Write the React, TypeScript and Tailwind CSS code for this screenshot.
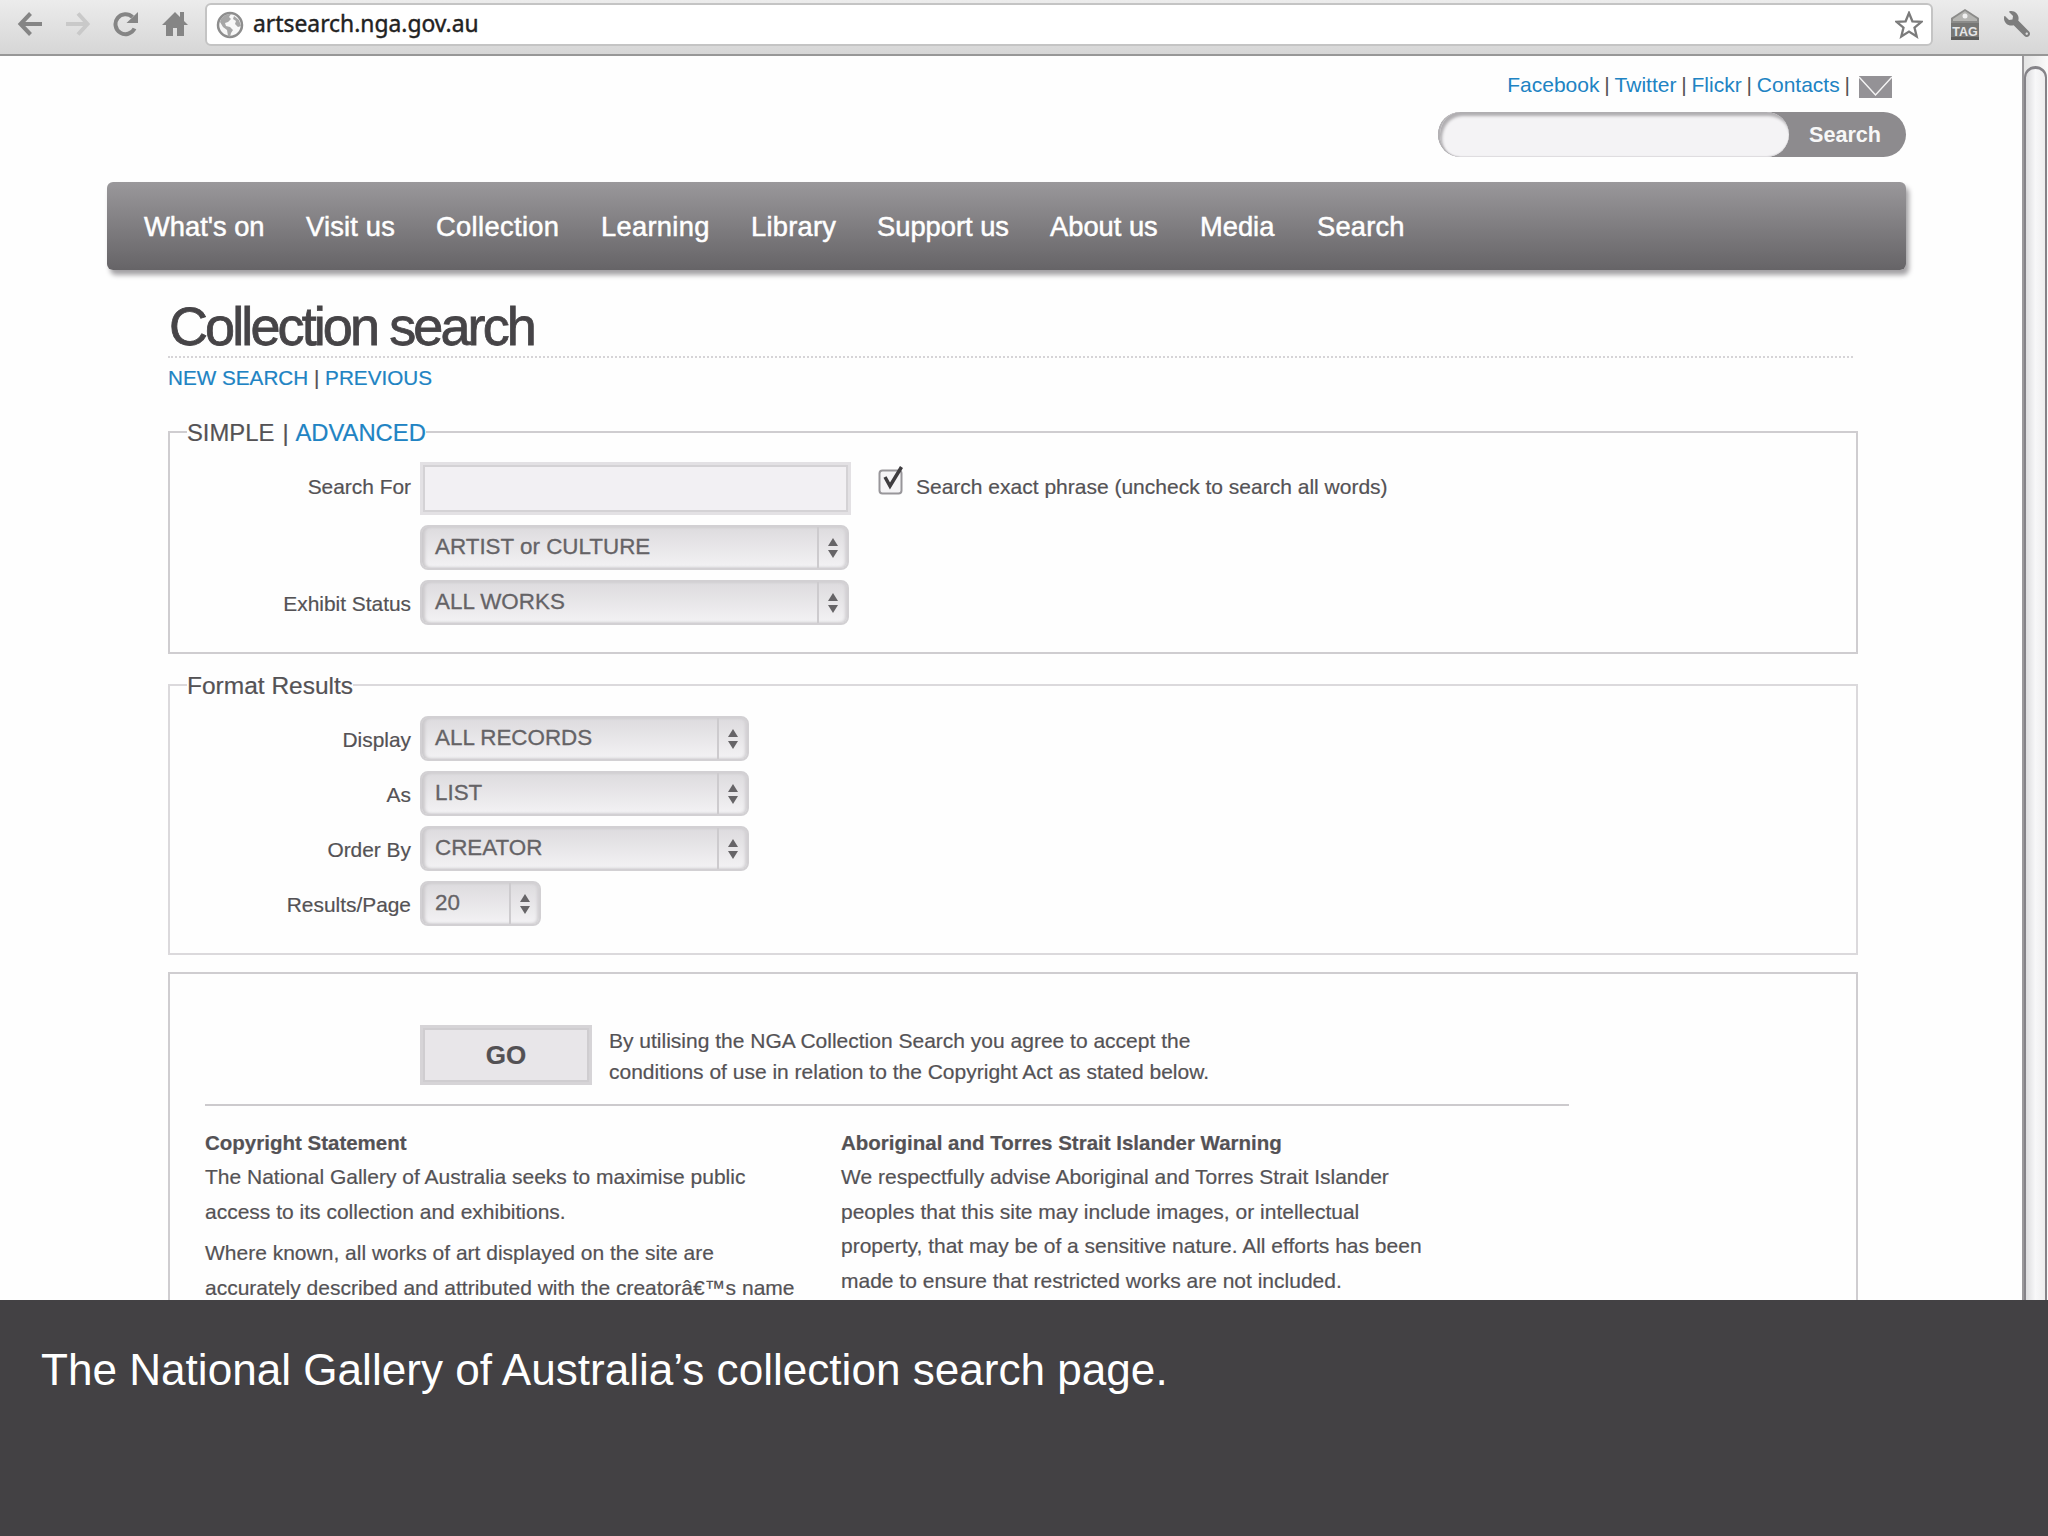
import type { ReactNode } from "react";
import { FaWrench } from "react-icons/fa";

const navItems = [
  { label: "What's on", style: "w-[162px]" },
  { label: "Visit us", style: "w-[130px] tracking-[0.2px]" },
  { label: "Collection", style: "w-[165px] tracking-[0.35px]" },
  { label: "Learning", style: "w-[150px] tracking-[0.3px]" },
  { label: "Library", style: "w-[126px] tracking-[0.25px]" },
  { label: "Support us", style: "w-[173px]" },
  { label: "About us", style: "w-[150px]" },
  { label: "Media", style: "w-[117px]" },
  { label: "Search", style: "w-[90px] tracking-[0.2px]" },
];

function Toolbar() {
  return (
    <div className="flex h-[56px] shrink-0 items-start border-b-2 border-[#979797] bg-linear-to-b from-[#ececec] to-[#d6d6d6]">
      <div className="flex pt-[11px] pl-[17px] text-[#858585]">
        <svg className="mr-[22px] h-[26px] w-[26px]" viewBox="0 0 26 26" fill="none" stroke="currentColor" strokeWidth="4">
          <path d="M13.5 2.5 3.5 13l10 10.500M4 13h21" />
        </svg>
        <svg className="mr-[22px] h-[26px] w-[26px] text-[#c9c9c9]" viewBox="0 0 26 26" fill="none" stroke="currentColor" strokeWidth="4">
          <path d="M13 2.500 22.500 13 13 23.500M22 13H1" />
        </svg>
        <svg className="mr-[23px] h-[26px] w-[26px]" viewBox="0 0 26 26" fill="none" stroke="currentColor" strokeWidth="4">
          <path d="M21.500 17.500A10 10 0 1 1 19.500 6" />
          <path d="M25 1v11H13.500z" fill="currentColor" stroke="none" />
        </svg>
        <svg className="h-[26px] w-[26px]" viewBox="0 0 26 26" fill="currentColor">
          <path d="M13 1 0 14h4v11h7v-8h4v8h7V14h4l-4-4V1h-4v5z" />
        </svg>
      </div>
      <div className="mt-[3px] ml-[17px] flex h-[43px] w-[1728px] items-center rounded-[6px] border-2 border-[#c4c4c4] bg-white pr-[8px] pl-[9px]">
        <svg className="h-[28px] w-[28px]" viewBox="0 0 28 28">
          <circle cx="14" cy="14" r="12" fill="#f7f7f7" stroke="#8d8d8d" strokeWidth="2.500" />
          <path d="M5 8c3-4 6-5 10-5l-2 3 2 2-3 3-3 1 1 3 4 1 3 3-2 3-1 4-2-1-1-6-4-3-3-5z" fill="#a6a6a6" />
          <path d="m18 5 5 4 2 6-3 1-3-3 1-3-3-2z" fill="#a6a6a6" />
        </svg>
        <span className="ml-[9px] flex-1 pb-[2px] font-['Noto_Sans',sans-serif] text-[22.850px] leading-[30px] text-[#222] [-webkit-text-stroke:0.4px_#222]">
          artsearch.nga.gov.au
        </span>
        <svg className="h-[28px] w-[28px]" viewBox="0 0 28 28" fill="#fff" stroke="#7b7b7b" strokeWidth="2.300">
          <path d="m14 2 3.400 8.300 9 .6-6.900 5.700 2.200 8.900L14 20.600l-7.700 4.900 2.200-8.900-6.900-5.700 9-.6z" />
        </svg>
      </div>
      <svg className="mt-[8px] ml-[17px] h-[33px] w-[30px]" viewBox="0 0 30 33">
        <path d="M1 32V10L15 1l14 9v22z" fill="#8b8b89" />
        <path d="M3 11 15 3l12 8v2H3z" fill="#b5b5b2" />
        <circle cx="15" cy="8" r="2.500" fill="#f0f0f0" />
        <path d="M1 15h28v17H1z" fill="#777775" />
        <path d="M1 29h28v3H1z" fill="#5d5d5b" />
        <text x="15" y="28" textAnchor="middle" fontFamily="Liberation Sans, sans-serif" fontWeight="700" fontSize="12.500" fill="#e6e6e6">
          TAG
        </text>
      </svg>
      <FaWrench className="mt-[11px] ml-[24px] h-[26px] w-[26px] -scale-x-100 text-[#7d7d7d]" />
    </div>
  );
}

function Link({ children }: { children: ReactNode }) {
  return <a className="text-[#2083c3]">{children}</a>;
}

function SelectBox({ value, width }: { value: string; width: string }) {
  return (
    <div
      className={`flex h-[45px] ${width} rounded-[8px] border-2 border-[#d2d0d3] bg-linear-to-b from-[#dddbde] to-[#f3f2f4] shadow-[inset_3px_0_3px_#cccacd,inset_-2px_0_3px_#d2d0d3]`}
    >
      <span className="flex-1 pl-[13px] text-[22.400px] leading-[39px] text-[#656366] [-webkit-text-stroke:0.3px_#656366]">
        {value}
      </span>
      <span className="flex w-[30px] items-center justify-center border-l-2 border-[#cdcbce]">
        <svg className="h-[20px] w-[10px]" viewBox="0 0 10 20" fill="#666467">
          <path d="M5 0 10 8H0zM5 20 0 12h10z" />
        </svg>
      </span>
    </div>
  );
}

function Row({ label, children }: { label?: string; children: ReactNode }) {
  return (
    <div className="flex">
      <span className="mr-[9px] w-[241px] text-right text-[20.900px] leading-[47px]">{label}</span>
      {children}
    </div>
  );
}

export default function App() {
  return (
    <div className="h-[1536px] w-[2048px] overflow-hidden bg-[#fefefe] font-['Liberation_Sans',Arial,sans-serif] text-[#545255]">
      <div className="flex h-[1300px] flex-col overflow-hidden">
        <Toolbar />
        <div className="flex h-[1244px]">
          <div className="w-[2022px] pl-[107px]">
            {/* top links and site search */}
            <div className="flex h-[126px] w-[1799px] flex-col items-end">
              <div className="mt-[15px] mr-[14px] flex h-[28px] items-center text-[21px] leading-[28px] [word-spacing:-1px] whitespace-pre">
                <Link>Facebook</Link> | <Link>Twitter</Link> | <Link>Flickr</Link> | <Link>Contacts</Link> |
                <svg className="mt-[4px] ml-[9px] h-[22px] w-[33px]" viewBox="0 0 33 22">
                  <path d="M0 0h33v22H0z" fill="#949296" />
                  <path d="m0 1 16.500 18L33 1" fill="none" stroke="#f4f4f4" strokeWidth="1.500" />
                </svg>
              </div>
              <div className="mt-[13px] flex h-[45px] w-[468px] rounded-full bg-[#8d8b8e]">
                <div className="h-[45px] w-[351px] rounded-full border-l-2 border-[#b5b3b6] bg-[#f4f3f5] shadow-[inset_2px_4px_3px_#b0aeb1,inset_0_-1px_1px_#dddbde]" />
                <span className="pl-[20px] text-[21.600px] leading-[46px] font-bold text-[#f7f7f7]">Search</span>
              </div>
            </div>
            <nav className="flex h-[88px] w-[1799px] rounded-[6px] bg-linear-to-b from-[#9a989b] to-[#666467] pl-[37px] text-[27.300px] leading-[90px] whitespace-nowrap text-white shadow-[3px_5px_5px_#a3a1a4] [-webkit-text-stroke:0.5px_white]">
              {navItems.map((item) => (
                <a key={item.label} className={item.style}>
                  {item.label}
                </a>
              ))}
            </nav>

            <div className="ml-[61px] w-[1690px] [-webkit-text-stroke:0.2px_currentColor]">
              <h1 className="h-[86px] w-[1685px] pt-[26px] pl-px text-[54px] leading-[60px] tracking-[-2.900px] text-[#464447] [-webkit-text-stroke:0.8px_#464447]">
                Collection search
              </h1>
              <div className="w-[1685px] border-t-2 border-dotted border-[#d6d4d7]" />
              <div className="mt-[5px] h-[53px] text-[20.700px] leading-[29px]">
                <Link>NEW SEARCH</Link> | <Link>PREVIOUS</Link>
              </div>

              <fieldset className="h-[238px] border-2 border-[#cfcdd0]">
                <legend className="ml-[17px] h-[31px] pt-[3px] text-[23.800px] leading-[28px] [word-spacing:1.500px]">
                  SIMPLE | <Link>ADVANCED</Link>
                </legend>
                <div className="flex flex-col gap-[10px] pt-[15px]">
                  <div className="flex h-[53px]">
                    <span className="mr-[9px] w-[241px] text-right text-[20.900px] leading-[49px]">Search For</span>
                    <div className="h-[53px] w-[431px] border-3 border-[#e3e1e4] bg-[#f2f0f3] shadow-[inset_0_0_0_2px_#d4d2d5]" />
                    <svg className="mt-px ml-[27px] h-[32px] w-[28px]" viewBox="0 0 28 32">
                      <rect x="1.500" y="7.500" width="22" height="23" rx="3" fill="#f5f4f6" stroke="#98969a" strokeWidth="2" />
                      <path d="m7 14 5 9L23.500 4" fill="none" stroke="#3f3d40" strokeWidth="3.500" />
                    </svg>
                    <span className="ml-[10px] text-[21px] leading-[49px]">
                      Search exact phrase (uncheck to search all words)
                    </span>
                  </div>
                  <Row>
                    <SelectBox value="ARTIST or CULTURE" width="w-[429px]" />
                  </Row>
                  <Row label="Exhibit Status">
                    <SelectBox value="ALL WORKS" width="w-[429px]" />
                  </Row>
                </div>
              </fieldset>

              <fieldset className="mt-[15px] h-[286px] border-2 border-[#dbd9dc]">
                <legend className="ml-[17px] h-[31px] pt-[3px] text-[24.500px] leading-[28px]">Format Results</legend>
                <div className="flex flex-col gap-[8px] pt-[16px]">
                  <Row label="Display">
                    <SelectBox value="ALL RECORDS" width="w-[329px]" />
                  </Row>
                  <Row label="As">
                    <SelectBox value="LIST" width="w-[329px]" />
                  </Row>
                  <Row label="Order By">
                    <SelectBox value="CREATOR" width="w-[329px]" />
                  </Row>
                  <Row label="Results/Page">
                    <SelectBox value="20" width="w-[121px]" />
                  </Row>
                </div>
              </fieldset>

              <div className="mt-[17px] h-[400px] border-2 border-[#cfcdd0] pl-[35px]">
                <div className="mt-[51px] flex pl-[215px]">
                  <button className="h-[60px] w-[172px] border-3 border-[#d6d4d7] bg-[#e8e6e9] text-[26px] leading-[52px] font-bold text-[#535154] shadow-[inset_0_0_0_2px_#cfcdd0]">
                    GO
                  </button>
                  <p className="ml-[17px] text-[21px] leading-[31px] whitespace-nowrap">
                    By utilising the NGA Collection Search you agree to accept the
                    <br />
                    conditions of use in relation to the Copyright Act as stated below.
                  </p>
                </div>
                <hr className="mt-[17px] w-[1364px] border-t-2 border-[#cccacd]" />
                <div className="mt-[20px] flex text-[21px] leading-[34.400px] whitespace-nowrap">
                  <div className="w-[636px]">
                    <h2 className="text-[20.500px] font-bold">Copyright Statement</h2>
                    <p>
                      The National Gallery of Australia seeks to maximise public
                      <br />
                      access to its collection and exhibitions.
                    </p>
                    <p className="mt-[7px]">
                      Where known, all works of art displayed on the site are
                      <br />
                      accurately described and attributed with the creatorâ€™s name
                    </p>
                  </div>
                  <div>
                    <h2 className="text-[20.500px] font-bold">Aboriginal and Torres Strait Islander Warning</h2>
                    <p>
                      We respectfully advise Aboriginal and Torres Strait Islander
                      <br />
                      peoples that this site may include images, or intellectual
                      <br />
                      property, that may be of a sensitive nature. All efforts has been
                      <br />
                      made to ensure that restricted works are not included.
                    </p>
                  </div>
                </div>
              </div>
            </div>
          </div>
          {/* scrollbar */}
          <div className="h-[1244px] w-[26px] overflow-hidden border-l-2 border-[#9b999c] bg-linear-to-r from-[#e4e4e4] to-[#fafafa] pt-[10px]">
            <div className="h-[1300px] w-[23px] rounded-full border-2 border-t-3 border-[#858388] bg-linear-to-r from-[#dcdcde] via-[#f8f8f9] to-[#ededee]" />
          </div>
        </div>
      </div>
      <div className="h-[236px] bg-[#434144] pt-[44px] pl-[41px] text-[44.100px] leading-[52px] text-white">
        The National Gallery of Australia’s collection search page.
      </div>
    </div>
  );
}
